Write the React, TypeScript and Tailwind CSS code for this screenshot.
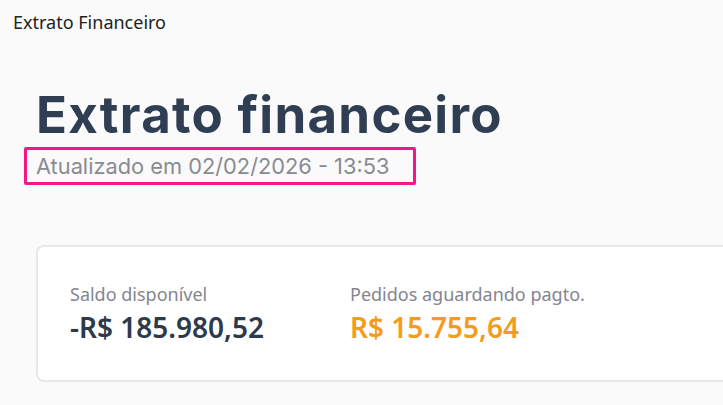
export default function App() {
  return (
    <div className="min-h-screen w-full overflow-hidden bg-[#fafafa] font-['Noto_Sans',sans-serif]">
      <div className="px-[13px] pt-[10px] text-[18px] leading-[24px] text-[#222]">
        Extrato Financeiro
      </div>

      <div className="pl-[36px] pt-[53px]">
        <h1 className="font-['Inter',sans-serif] text-[51px] font-bold leading-[56px] tracking-[0.025em] text-[#2f3e52]">
          Extrato financeiro
        </h1>
        <div className="-ml-[12px] mt-[4px] inline-block rounded-[2px] border-[3px] border-[#f5168a] pl-[9px] pr-[24px]">
          <span className="block font-['Inter',sans-serif] text-[21.8px] leading-[32px] text-[#8a8a94]">
            Atualizado em 02/02/2026 - 13:53
          </span>
        </div>
      </div>

      <div className="ml-[36px] mt-[60px] w-[720px] rounded-[8px] border-2 border-[#e8e8e8] bg-white py-[35px] pl-[32px]">
        <div className="flex">
          <div className="w-[280px]">
            <div className="text-[18px] leading-[24px] text-[#85858f]">Saldo disponível</div>
            <div className="mt-[3px] text-[28px] font-semibold leading-[36px] text-[#2d3a4b]">
              -R$ 185.980,52
            </div>
          </div>
          <div>
            <div className="text-[18px] leading-[24px] text-[#85858f]">Pedidos aguardando pagto.</div>
            <div className="mt-[3px] text-[28px] font-semibold leading-[36px] text-[#f49c1c]">
              R$ 15.755,64
            </div>
          </div>
        </div>
      </div>
    </div>
  );
}
